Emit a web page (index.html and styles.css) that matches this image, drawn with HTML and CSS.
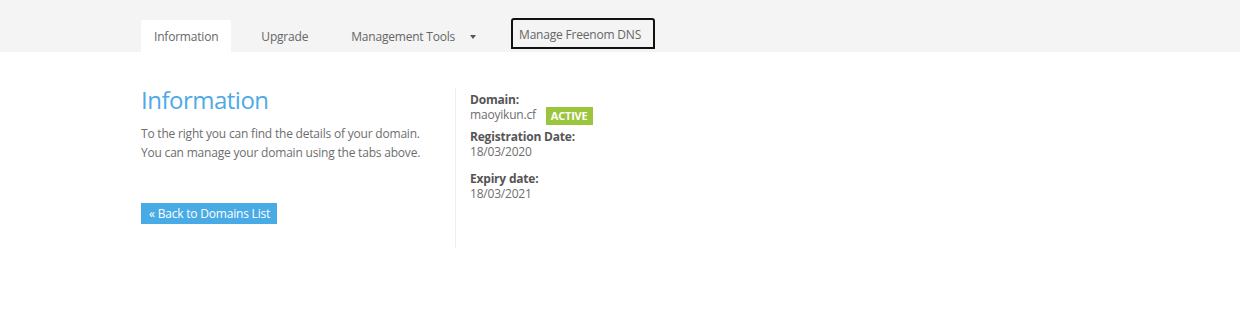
FILE: index.html
```html
<!DOCTYPE html>
<html>
<head>
<meta charset="utf-8">
<link rel="stylesheet" href="styles.css">
</head>
<body>
<div class="topband">
  <ul class="tabs">
    <li class="tab active">Information</li>
    <li class="tab">Upgrade</li>
    <li class="tab dropdown">Management Tools <span class="caret"></span></li>
    <li class="tab boxed">Manage Freenom DNS</li>
  </ul>
</div>
<div class="content">
  <div class="left">
    <h1 class="title">Information</h1>
    <p class="desc">To the right you can find the details of your domain.<br>You can manage your domain using the tabs above.</p>
    <a class="btn">« Back to Domains List</a>
  </div>
  <div class="right">
    <div class="label">Domain:</div>
    <div class="value domain">maoyikun.cf <span class="badge">ACTIVE</span></div>
    <div class="label">Registration Date:</div>
    <div class="value">18/03/2020</div>
    <div class="label spaced">Expiry date:</div>
    <div class="value">18/03/2021</div>
  </div>
</div>
</body>
</html>
```
FILE: styles.css
```css
html, body {
  margin: 0;
  padding: 0;
  background: #fff;
  font-family: "Open Sans", "DejaVu Sans", sans-serif;
  color: #6e6e6e;
}
.topband {
  background: #f4f4f4;
  height: 52px;
  box-sizing: border-box;
  padding-top: 20px;
}
.tabs {
  list-style: none;
  margin: 0 0 0 141px;
  padding: 0;
  display: flex;
  align-items: flex-start;
}
.tab {
  font-size: 12px;
  letter-spacing: -0.2px;
  color: #666;
  height: 32px;
  line-height: 34px;
  padding: 0 13px;
  margin-right: 17px;
  border-radius: 3px 3px 0 0;
  white-space: nowrap;
}
.tab.active {
  background: #fff;
}
.caret {
  display: inline-block;
  width: 0;
  height: 0;
  border-left: 3.5px solid transparent;
  border-right: 3.5px solid transparent;
  border-top: 4px solid #555;
  margin-left: 12px;
  vertical-align: middle;
  position: relative;
  top: -1px;
}
.tab.dropdown {
  margin-right: 22px;
}
.tab.boxed {
  margin-top: -2px;
  height: 27px;
  line-height: 29px;
  padding: 0 12px 0 6px;
  border: 2px solid #111;
  margin-right: 0;
}
.content {
  display: flex;
  margin-left: 141px;
  padding-top: 36px;
}
.left {
  width: 315px;
  border-right: 1px solid #eeeeee;
  height: 160px;
  box-sizing: border-box;
}
.title {
  margin: -2px 0 0 0;
  font-size: 24px;
  letter-spacing: -0.5px;
  font-weight: 400;
  color: #4eaae6;
  line-height: 28px;
}
.desc {
  margin: 10px 0 0 0;
  font-size: 12px;
  letter-spacing: -0.2px;
  line-height: 19px;
  color: #6e6e6e;
}
.btn {
  display: inline-block;
  margin-top: 41px;
  background: #49abe6;
  color: #fff;
  font-size: 12px;
  letter-spacing: -0.2px;
  line-height: 21px;
  height: 21px;
  padding: 0 7px 0 8px;
}
.right {
  padding-left: 14px;
  padding-top: 4px;
  font-size: 12px;
  letter-spacing: -0.2px;
}
.label {
  font-weight: 700;
  color: #555;
  line-height: 15px;
}
.value {
  color: #6e6e6e;
  line-height: 15px;
}
.domain {
  display: flex;
  align-items: center;
  height: 16px;
  margin-bottom: 6px;
}
.badge {
  display: inline-block;
  background: #9bc53d;
  color: #fff;
  font-weight: 700;
  font-size: 11px;
  letter-spacing: -0.2px;
  line-height: 18px;
  padding: 0 5px;
  margin-left: 10px;
  position: relative;
  top: 1px;
}
.label + .value {
  line-height: 16px;
}
.label.spaced {
  margin-top: 11px;
}
```
